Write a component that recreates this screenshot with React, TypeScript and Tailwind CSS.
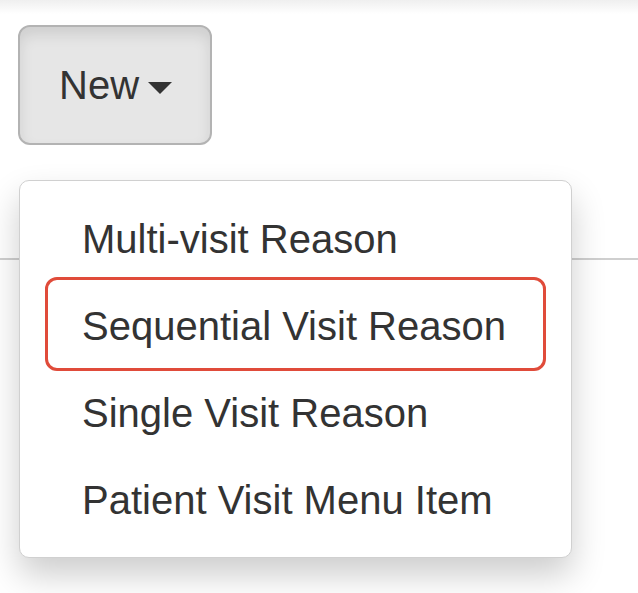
import React from 'react';

const items = [
    'Multi-visit Reason',
    'Sequential Visit Reason',
    'Single Visit Reason',
    'Patient Visit Menu Item',
];

const App: React.FC = () => {
    return (
        <div className="relative min-h-[593px] w-[638px] bg-white text-[#333] font-['Liberation_Sans',Arial,sans-serif] overflow-hidden">
            <div className="h-[14px] bg-gradient-to-b from-[#efefef] to-white" />
            <div className="pl-[18px] pt-[11px]">
                <button className="flex h-[120px] w-[194px] items-center gap-[9px] rounded-[12px] border-2 border-[#b3b3b3] bg-[#e6e6e6] pl-[39px] text-[40px] leading-none text-[#333] shadow-[inset_0_8px_14px_rgba(0,0,0,0.1)]">
                    <span>New</span>
                    <span className="mt-[6px] h-0 w-0 border-x-[12px] border-t-[12px] border-x-transparent border-t-[#333]" />
                </button>
            </div>
            <div className="h-[115px] border-b-2 border-[#cfcfcf]" />

            <div className="absolute left-[19px] top-[180px] w-[553px] rounded-[10px] border border-[#d0d0d0] bg-white py-[14px] shadow-[0_17px_34px_rgba(0,0,0,0.2)]">
                {items.map((item) => (
                    <div key={item} className="flex h-[87px] items-center pl-[62px] text-[40px] leading-none whitespace-nowrap">
                        {item}
                    </div>
                ))}
                <div className="absolute left-[25px] top-[96px] h-[94px] w-[501px] rounded-[12px] border-[3px] border-[#e04b3a]" />
            </div>
        </div>
    );
};

export default App;
